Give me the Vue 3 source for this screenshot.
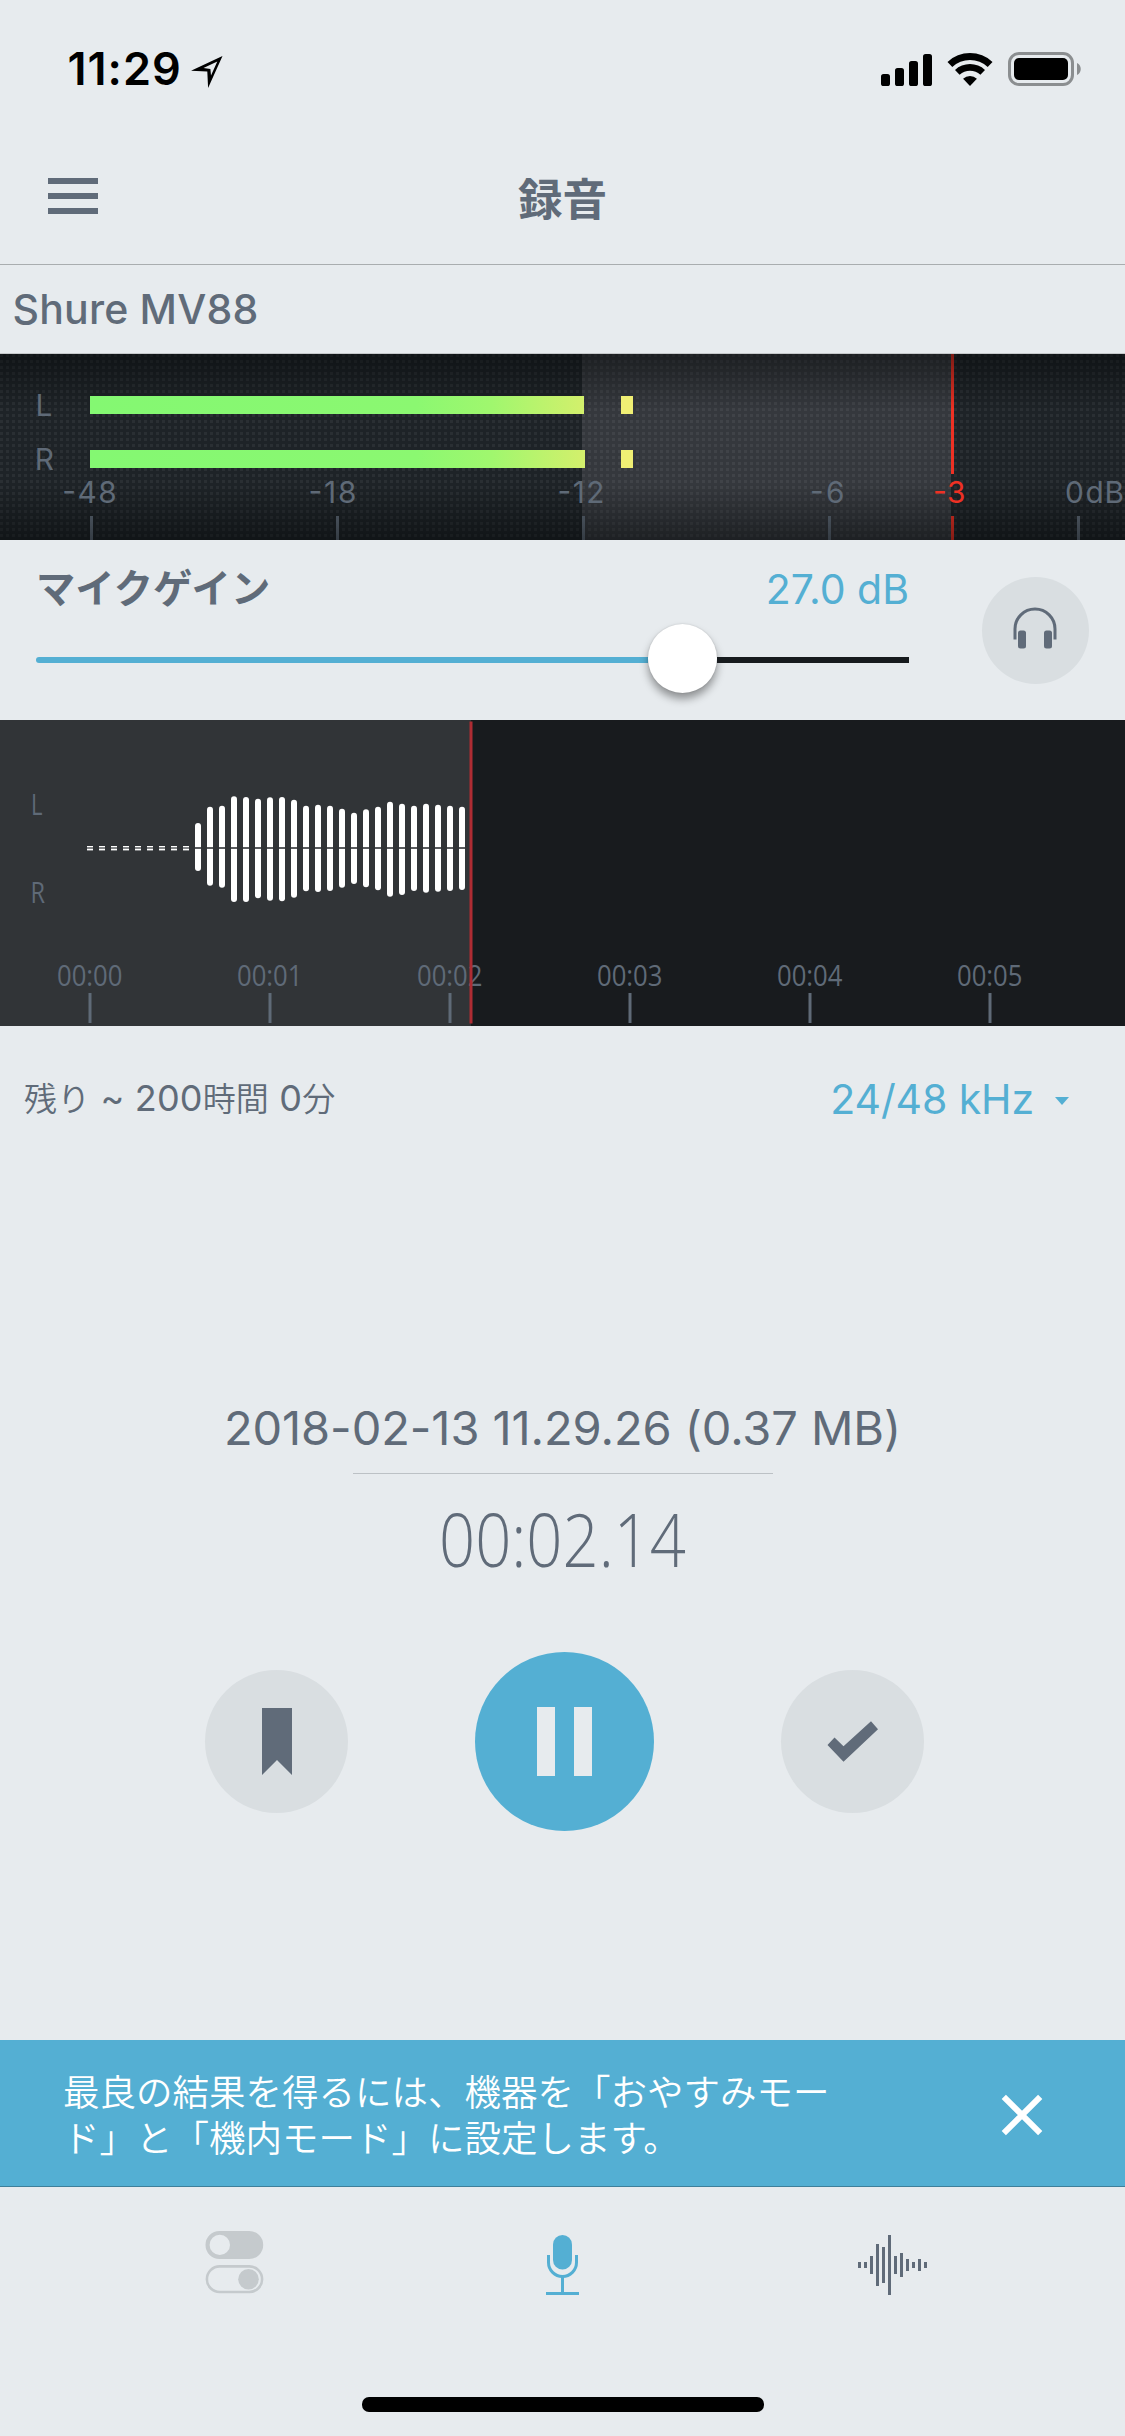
<script setup>
const meterTicks = [
  { label: '-48', tick: 90, x: 62.3, len: 54.5 },
  { label: '-18', tick: 336, x: 308.5, len: 48 },
  { label: '-12', tick: 582, x: 557.5, len: 47 },
  { label: '-6', tick: 828, x: 810, len: 34.5 },
  { label: '-3', tick: 951, x: 933, len: 32.5, clip: true },
  { label: '0', tick: 1077, x: 1065, len: 18.5 },
]

const peaks = [
  [823, 871], [806.7, 885.7], [805.7, 887.7], [796.3, 902], [797, 902],
  [798.7, 898.3], [797.3, 900.7], [797, 901.3], [799.7, 897.7], [805.7, 891.3],
  [804.7, 892], [805.7, 891], [808.7, 887.7], [812.7, 884], [809.3, 887.3],
  [806.7, 890.3], [801.7, 896.7], [803.7, 895], [805.7, 891], [803.7, 892.7],
  [804.7, 891.7], [805.7, 891], [806.7, 890],
].map(([top, bottom], i) => ({ x: 195 + i * 12, y: top - 720, h: bottom - top }))

const silence = Array.from({ length: 9 }, (_, i) => 87 + i * 12)
const seconds = Array.from({ length: 6 }, (_, i) => ({ label: `00:0${i}`, x: 90 + i * 180 }))
const tabWave = [3, 3, 9, 21, 18, 30, 9, 12, 6, 3, 6, 3]
</script>

<template>
  <div class="screen">
    <header class="status">
      <div class="clock">
        <span class="time">11:29</span>
        <svg width="32" height="32" viewBox="0 0 32 32">
          <path fill-rule="evenodd" d="M31.5 0 0 14.8l16.3.8.8 16.4zM26.3 5.5l-6.3 14-.6-6.6-6.9-.8z" />
        </svg>
      </div>
      <div class="indicators">
        <svg width="51" height="33" viewBox="0 0 51 33">
          <rect x="0" y="21" width="9" height="12" rx="2.6" />
          <rect x="14" y="15" width="9" height="18" rx="2.6" />
          <rect x="28" y="8" width="9" height="25" rx="2.6" />
          <rect x="42" y="1" width="9" height="32" rx="2.6" />
        </svg>
        <svg width="46" height="33" viewBox="-23 -33 46 33">
          <path d="M-22.5-24.1A33 33 0 0 1 22.5-24.1L17.7-19A26 26 0 0 0-17.7-19z" />
          <path d="M-15-16.1A22 22 0 0 1 15-16.1L10.4-11.3A15.5 15.5 0 0 0-10.4-11.3z" />
          <path d="M0 0-6.9-7.2A10 10 0 0 1 6.9-7.2z" />
        </svg>
        <svg width="73" height="34" viewBox="0 0 73 34">
          <rect x="1.5" y="1.5" width="63" height="31" rx="9.5" fill="none" stroke="#8b8e90" stroke-width="3" />
          <rect x="6" y="6" width="54" height="22" rx="5" />
          <path d="M69 11c5 2 5 10 0 12z" fill="#8b8e90" />
        </svg>
      </div>
    </header>

    <nav class="navbar">
      <div class="burger"><i></i><i></i><i></i></div>
      <h1>録音</h1>
      <div class="spacer"></div>
    </nav>

    <div class="device">Shure MV88</div>

    <svg class="meter" width="1125" height="186" viewBox="0 354 1125 186">
      <defs>
        <pattern id="grid" x="0" y="354" width="6" height="6" patternUnits="userSpaceOnUse">
          <rect width="3" height="3" fill="#fff" fill-opacity=".055" />
        </pattern>
        <linearGradient id="level" gradientUnits="userSpaceOnUse" x1="90" y1="0" x2="633" y2="0">
          <stop offset="0" stop-color="#84f872" />
          <stop offset=".6" stop-color="#8bf871" />
          <stop offset=".74" stop-color="#a0f76e" />
          <stop offset=".9" stop-color="#d0f06c" />
          <stop offset="1" stop-color="#f0ef74" />
        </linearGradient>
        <linearGradient id="shade" x1="0" y1="0" x2="0" y2="1">
          <stop offset="0" stop-color="#000304" stop-opacity=".48" />
          <stop offset=".3" stop-color="#000304" stop-opacity="0" />
          <stop offset=".7" stop-color="#000304" stop-opacity="0" />
          <stop offset="1" stop-color="#000304" stop-opacity=".45" />
        </linearGradient>
      </defs>
      <rect y="354" width="1125" height="186" fill="#1e2327" />
      <rect x="582" y="354" width="369" height="186" fill="#35383d" />
      <rect y="354" width="1125" height="186" fill="url(#grid)" />
      <rect v-for="t in meterTicks" :key="t.tick" :x="t.tick" y="516" width="3" height="24" :fill="t.clip ? '#ee3124' : '#5f6a77'" />
      <rect x="951" y="354" width="3" height="120" fill="#ee3124" />
      <rect y="354" width="1125" height="186" fill="url(#shade)" />
      <rect x="90" y="396" width="494" height="18" fill="url(#level)" />
      <rect x="90" y="450" width="495" height="18" fill="url(#level)" />
      <rect x="621" y="396" width="12" height="18" fill="#f0ef74" />
      <rect x="621" y="450" width="12" height="18" fill="#f0ef74" />
      <g class="meter-text">
        <text x="35.5" y="416">L</text>
        <text x="34.7" y="470">R</text>
        <text v-for="t in meterTicks" :key="t.label" :x="t.x" y="503" :textLength="t.len" :class="{ clip: t.clip }">{{ t.label }}</text>
        <text x="1085.5" y="503" textLength="38.5">dB</text>
      </g>
    </svg>

    <section class="gain">
      <div class="gain-main">
        <div class="gain-head">
          <span class="gain-label">マイクゲイン</span>
          <span class="gain-value">27.0 dB</span>
        </div>
        <div class="slider">
          <div class="filled"></div>
          <div class="thumb"></div>
          <div class="rest"></div>
        </div>
      </div>
      <div class="monitor">
        <svg width="44" height="42" viewBox="0 0 44 42">
          <path d="M2 32.5V22A20 20 0 0 1 42 22V32.5" fill="none" stroke="#606b79" stroke-width="3" />
          <rect x="5" y="23.5" width="8" height="18" rx="2.5" />
          <rect x="31" y="23.5" width="8" height="18" rx="2.5" />
        </svg>
      </div>
    </section>

    <svg class="wave" width="1125" height="306" viewBox="0 0 1125 306">
      <rect width="1125" height="306" fill="#181b1e" />
      <rect width="471" height="306" fill="#313437" />
      <g fill="#fff">
        <template v-for="x in silence" :key="x">
          <rect :x="x" y="126" width="6" height="5" fill-opacity=".4" />
          <rect :x="x" y="126" width="6" height="1" />
          <rect :x="x" y="129" width="6" height="1" />
        </template>
        <rect v-for="p in peaks" :key="p.x" :x="p.x" :y="p.y" width="6" :height="p.h" rx="3" />
      </g>
      <rect x="195" y="127.2" width="270" height="1.6" fill="#313437" />
      <g class="wave-text">
        <text x="31" y="94.5" textLength="11.5" lengthAdjust="spacingAndGlyphs">L</text>
        <text x="30.5" y="183" textLength="14.5" lengthAdjust="spacingAndGlyphs">R</text>
        <text v-for="s in seconds" :key="s.label" :x="s.x - 33" y="266" textLength="65.5" lengthAdjust="spacingAndGlyphs">{{ s.label }}</text>
      </g>
      <rect v-for="s in seconds" :key="s.x" :x="s.x - 1.5" y="273" width="3" height="30" fill="#5f6a77" />
      <rect x="469.5" y="1.5" width="3" height="302" fill="#ae2c33" />
    </svg>

    <div class="format">
      <span class="remaining">残り<b> ~ 200</b>時間<b> 0</b>分</span>
      <span class="rate">24/48 kHz<i></i></span>
    </div>

    <main class="take">
      <div class="file">2018-02-13 11.29.26 (0.37 MB)</div>
      <hr />
      <svg class="timer" width="260" height="80" viewBox="0 0 260 80">
        <text x="6" y="65" textLength="247" lengthAdjust="spacingAndGlyphs">00:02.14</text>
      </svg>
      <div class="controls">
        <div class="round">
          <svg width="30" height="67" viewBox="0 0 30 67"><path d="M0 0H30V67L15 52 0 67z" /></svg>
        </div>
        <div class="round pause"><i></i><i></i></div>
        <div class="round">
          <svg width="52" height="41" viewBox="0 0 52 41"><path d="M.5 24 7.5 16.5 16.5 25.3 44 .3 51 8.3 16.5 40.7z" /></svg>
        </div>
      </div>
    </main>

    <aside class="tip">
      <p>最良の結果を得るには、機器を「おやすみモー<br />ド」と「機内モード」に設定します。</p>
      <svg width="42" height="42" viewBox="0 0 42 42">
        <path d="M2.8 2.8 39.2 39.2M39.2 2.8 2.8 39.2" stroke="#fff" stroke-width="6" />
      </svg>
    </aside>

    <footer class="tabs">
      <svg width="375" height="70" viewBox="0 2228 375 70">
        <g fill="#c5cacd">
          <path fill-rule="evenodd" d="M219.5 2231H249.2A14 14 0 0 1 249.2 2259H219.5A14 14 0 0 1 219.5 2231zM219.8 2234.7A10.2 10.2 0 1 0 219.8 2255.1 10.2 10.2 0 1 0 219.8 2234.7z" />
          <rect x="206.9" y="2266.4" width="55.2" height="25.6" rx="12.8" fill="none" stroke="#c5cacd" stroke-width="2.6" />
          <circle cx="248.5" cy="2279.3" r="10.3" />
        </g>
      </svg>
      <svg width="375" height="70" viewBox="375 2228 375 70">
        <g fill="#54afd3">
          <rect x="553" y="2235" width="19" height="34.5" rx="9.5" />
          <path d="M548.5 2255V2262.5A14 14 0 0 0 576.5 2262.5V2255" fill="none" stroke="#54afd3" stroke-width="3" />
          <rect x="561" y="2277" width="3" height="16" />
          <rect x="546" y="2292" width="33" height="3" />
        </g>
      </svg>
      <svg width="375" height="70" viewBox="750 2228 375 70">
        <rect v-for="(h, i) in tabWave" :key="i" :x="858 + i * 6" :y="2265 - h" width="3" :height="h * 2" fill="#606b79" />
      </svg>
    </footer>
    <div class="home"></div>
  </div>
</template>

<style>
body {
  margin: 0;
  background: #e7ebee;
}
</style>

<style scoped>
.screen {
  width: 1125px;
  height: 2436px;
  overflow: hidden;
  display: flex;
  flex-direction: column;
  background: #e7ebee;
  color: #606b79;
  font-family: Inter, "Noto Sans CJK JP", sans-serif;
  font-size: 41px;
}
.screen > * {
  flex: none;
}
svg {
  display: block;
}
.status {
  height: 132px;
  box-sizing: border-box;
  padding: 6px 44px 0 67.5px;
  display: flex;
  justify-content: space-between;
  align-items: center;
  color: #000;
}
.clock,
.indicators {
  display: flex;
  align-items: center;
}
.clock {
  gap: 9.5px;
}
.clock svg {
  margin-top: 5px;
}
.time {
  font-size: 45px;
  font-weight: 600;
  line-height: 52px;
  letter-spacing: 1px;
}
.indicators {
  gap: 15px;
}
.navbar {
  height: 132px;
  padding: 0 48px;
  display: flex;
  justify-content: space-between;
  align-items: center;
  border-bottom: 1px solid #a9adaf;
}
.burger {
  width: 50px;
  margin-top: -4px;
  display: flex;
  flex-direction: column;
  gap: 9.4px;
}
.burger i {
  height: 6px;
  background: #606b79;
}
.spacer {
  width: 50px;
}
h1 {
  margin: 4px 0 0;
  font-size: 44.5px;
  line-height: 60px;
  font-weight: 700;
}
.device {
  height: 88px;
  line-height: 88px;
  padding-left: 12.5px;
  font-weight: 450;
  letter-spacing: 0.2px;
  border-bottom: 1px solid #c5c8ca;
}
.meter-text {
  font-size: 29.8px;
  font-weight: 400;
  fill: #5f6a77;
}
.meter-text .clip {
  fill: #ee3124;
}
.gain {
  height: 180px;
  display: flex;
  justify-content: space-between;
  box-sizing: border-box;
  padding: 0 36.5px 0 36px;
}
.gain-main {
  width: 873px;
}
.gain-head {
  height: 83px;
  padding: 8px 0 0 0;
  box-sizing: border-box;
  display: flex;
  justify-content: space-between;
  line-height: 82px;
}
.gain-label {
  font-size: 39.3px;
  font-weight: 700;
}
.gain-value {
  color: #54afd3;
}
.slider {
  height: 70px;
  display: flex;
  align-items: center;
}
.filled {
  width: 612px;
  height: 6px;
  margin-top: 4px;
  border-radius: 3px 0 0 3px;
  background: #54afd3;
}
.thumb {
  width: 69px;
  height: 69px;
  border-radius: 50%;
  background: #fff;
  box-shadow: 0 6px 9px rgba(0, 0, 0, 0.38), 0 0 2px rgba(0, 0, 0, 0.15);
}
.rest {
  flex: 1;
  height: 6px;
  margin-top: 4px;
  background: #171b1e;
}
.monitor {
  width: 107px;
  height: 107px;
  margin-top: 36.5px;
  border-radius: 50%;
  background: #d9dee1;
  display: flex;
  align-items: center;
  justify-content: center;
  fill: #606b79;
}
.monitor svg {
  margin-top: -5px;
}
.wave-text {
  font-family: "Open Sans", sans-serif;
  font-size: 30px;
  font-weight: 500;
  fill: #5f6a77;
}
.format {
  height: 146px;
  padding: 0 56px 0 24px;
  display: flex;
  justify-content: space-between;
  align-items: center;
}
.remaining {
  margin-top: -4px;
  font-size: 33px;
  font-weight: 350;
  letter-spacing: 0.15px;
}
.remaining b {
  font-size: 36px;
  font-weight: 400;
}
.rate {
  display: flex;
  align-items: center;
  gap: 21px;
  letter-spacing: -0.1px;
  color: #54afd3;
}
.rate i {
  border: 7.5px solid transparent;
  border-top: 8px solid #54afd3;
  border-bottom: 0;
  margin-top: 4px;
}
.take {
  height: 868px;
  padding-top: 226px;
  box-sizing: border-box;
  display: flex;
  flex-direction: column;
  align-items: center;
}
.file {
  font-size: 47px;
  line-height: 60px;
  letter-spacing: -0.08px;
}
hr {
  width: 420px;
  height: 1px;
  margin: 15px 0 28px;
  border: 0;
  background: #bcc1c5;
}
.timer {
  font-family: "Open Sans", sans-serif;
  font-size: 74px;
  font-weight: 360;
  fill: #606b79;
}
.controls {
  width: 719px;
  margin: 69.5px 0 0 4px;
  display: flex;
  justify-content: space-between;
  align-items: center;
}
.round {
  width: 143px;
  height: 143px;
  border-radius: 50%;
  background: #d9dee1;
  display: flex;
  align-items: center;
  justify-content: center;
  fill: #606b79;
}
.pause {
  width: 179px;
  height: 179px;
  gap: 19px;
  background: #54afd3;
}
.pause i {
  width: 18px;
  height: 69px;
  background: #e7ebee;
}
.tip {
  height: 146px;
  padding: 0 82px 0 63px;
  display: flex;
  justify-content: space-between;
  align-items: center;
  background: #54afd3;
  color: #fff;
  border-bottom: 1px solid #3e7f9a;
}
.tip p {
  margin: 2px 0 0;
  font-family: "Noto Sans CJK JP", sans-serif;
  font-size: 36.5px;
  line-height: 46px;
  font-weight: 350;
  white-space: nowrap;
}
.tip svg {
  margin-top: 4px;
}
.tabs {
  height: 210px;
  padding-top: 41px;
  box-sizing: border-box;
  display: flex;
}
.home {
  width: 402px;
  height: 15px;
  margin: 0 auto;
  border-radius: 7px;
  background: #000;
}
</style>
